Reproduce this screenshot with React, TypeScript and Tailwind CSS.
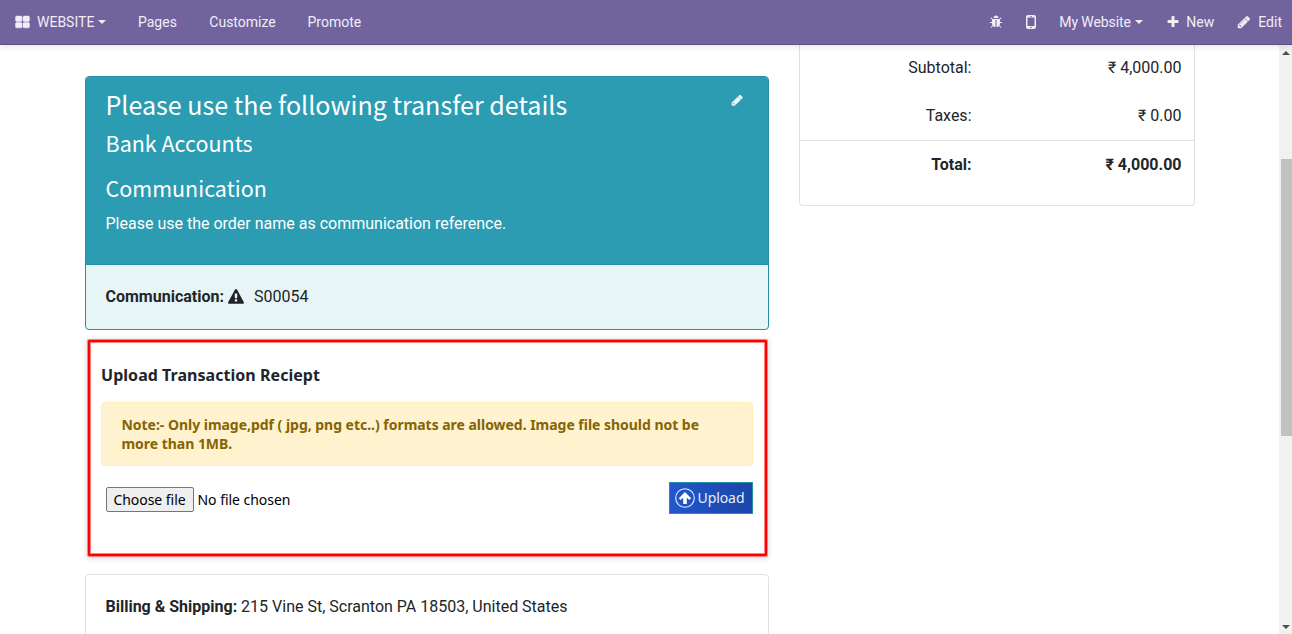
import React from "react";

const paths = {
  grid: "M832 1024v384q0 52-38 90t-90 38h-512q-52 0-90-38t-38-90v-384q0-52 38-90t90-38h512q52 0 90 38t38 90zm0-768v384q0 52-38 90t-90 38h-512q-52 0-90-38t-38-90v-384q0-52 38-90t90-38h512q52 0 90 38t38 90zm896 768v384q0 52-38 90t-90 38h-512q-52 0-90-38t-38-90v-384q0-52 38-90t90-38h512q52 0 90 38t38 90zm0-768v384q0 52-38 90t-90 38h-512q-52 0-90-38t-38-90v-384q0-52 38-90t90-38h512q52 0 90 38t38 90z",
  pencil:
    "M491 1536l91-91-235-235-91 91v107h128v128h107zm523-928q0-22-22-22-10 0-17 7l-542 542q-7 7-7 17 0 22 22 22 10 0 17-7l542-542q7-7 7-17zm-54-192l416 416-832 832h-416v-416zm683 96q0 53-37 90l-166 166-416-416 166-165q36-38 90-38 53 0 91 38l235 234q37 39 37 91z",
  plus: "M1600 736v192q0 40-28 68t-68 28h-416v416q0 40-28 68t-68 28h-192q-40 0-68-28t-28-68v-416h-416q-40 0-68-28t-28-68v-192q0-40 28-68t68-28h416v-416q0-40 28-68t68-28h192q40 0 68 28t28 68v416h416q40 0 68 28t28 68z",
  bug: "M1696 960q0 26-19 45t-45 19h-224q0 171-67 290l208 209q19 19 19 45t-19 45q-18 19-45 19t-45-19l-198-197q-5 5-15 13t-42 28.5-65 36.5-82 29-97 13v-896h-128v896q-51 0-101.5-13.5t-87-33-66-39-43.5-32.5l-15-14-183 207q-20 21-48 21-24 0-43-16-19-18-20.5-44.5t15.5-46.5l202-227q-58-114-58-274h-224q-26 0-45-19t-19-45 19-45 45-19h224v-294l-173-173q-19-19-19-45t19-45 45-19 45 19l173 173h844l173-173q19-19 45-19t45 19 19 45-19 45l-173 173v294h224q26 0 45 19t19 45zm-480-576h-640q0-133 93.5-226.5t226.5-93.5 226.5 93.5 93.5 226.5z",
  warning:
    "M1024 1375v-190q0-14-9.5-23.5t-22.5-9.5h-192q-13 0-22.5 9.5t-9.5 23.5v190q0 14 9.5 23.5t22.5 9.5h192q13 0 22.5-9.5t9.5-23.5zm-2-374l18-459q0-12-10-19-13-11-24-11h-220q-11 0-24 11-10 7-10 21l17 457q0 10 10 16.5t24 6.500h185q14 0 23.500-6.500t10.500-16.500zm-14-934l768 1408q35 63-2 126-17 29-46.500 46t-63.500 17h-1536q-34 0-63.500-17t-46.500-46q-37-63-2-126l768-1408q17-31 47-49t65-18 65 18 47 49z",
};

function Icon({ name, className }: { name: keyof typeof paths; className: string }) {
  return (
    <svg viewBox="0 0 1792 1792" className={`shrink-0 fill-current ${className}`} aria-hidden="true">
      <path d={paths[name]} />
    </svg>
  );
}

function Caret() {
  return (
    <svg viewBox="0 0 8 4" className="ml-[4px] h-[4px] w-[8px] shrink-0 fill-current" aria-hidden="true">
      <path d="M0 0h8L4 4z" />
    </svg>
  );
}

function Navbar() {
  return (
    <nav className="relative z-10 flex h-[45px] items-center border-b border-[#5f5187] bg-[#71639e] pr-[10px] pl-[15px] text-[14px] leading-[44px] text-[#f0eef5] shadow-[0_2px_6px_rgba(0,0,0,0.1)]">
      <a className="flex w-[123px] items-center">
        <Icon name="grid" className="mr-[7px] size-[15px] stroke-current stroke-[60]" />
        WEBSITE
        <Caret />
      </a>
      <a className="w-[71.300px]">Pages</a>
      <a className="w-[98.200px]">Customize</a>
      <a>Promote</a>
      <div className="ml-auto flex items-center">
        <Icon name="bug" className="mr-[23px] size-[14px]" />
        <svg viewBox="0 0 10 14" className="mr-[23px] h-[14px] w-[10px]" aria-hidden="true">
          <path
            fillRule="evenodd"
            fill="currentColor"
            d="M2 0h6a2 2 0 0 1 2 2v10a2 2 0 0 1-2 2H2a2 2 0 0 1-2-2V2a2 2 0 0 1 2-2zM1.500 2.500v8.500h7V2.500zM4 1v.7h2V1zM5 11.700a.8.8 0 1 0 0 1.600.8.8 0 0 0 0-1.600z"
          />
        </svg>
        <a className="flex w-[107px] items-center tracking-[-0.08px]">
          My Website
          <Caret />
        </a>
        <a className="flex w-[71px] items-center">
          <Icon name="plus" className="mr-[6px] size-[14px]" />
          New
        </a>
        <a className="flex items-center">
          <Icon name="pencil" className="mr-[7px] size-[14px] stroke-current stroke-[50]" />
          Edit
        </a>
      </div>
    </nav>
  );
}

function TransferCard() {
  return (
    <section className="h-[254px] overflow-hidden rounded-[4px] border border-[#278ea5] bg-[#e8f5f7]">
      <div className="flex h-[188px] justify-between border-b border-[#278ea5] bg-[#2c9cb2] px-[19.500px] text-white">
        <div>
          <div className="font-['Noto_Sans_CJK_SC',sans-serif]">
            <h2 className="mt-[10px] text-[25.080px] leading-[34px]">Please use the following transfer details</h2>
            <h3 className="mt-[8px] text-[21.500px] leading-[28px]">Bank Accounts</h3>
            <h3 className="mt-[17px] text-[21.500px] leading-[28px]">Communication</h3>
          </div>
          <p className="mt-[10px] text-[16px] leading-[24px]">Please use the order name as communication reference.</p>
        </div>
        <Icon name="pencil" className="mt-[16.500px] mr-[5px] size-[12.500px] stroke-current stroke-[50]" />
      </div>
      <div className="flex h-[64px] items-center px-[19.500px] text-[16px]">
        <b>Communication:</b>
        <Icon name="warning" className="ml-[4.500px] size-[16px]" />
        <span className="ml-[9.500px]">S00054</span>
      </div>
    </section>
  );
}

function UploadCard() {
  return (
    <section className="mr-[2px] ml-[3px] mt-[10px] h-[216px] rounded-[1px] border-[2px] border-[#ff0000] pr-[12px] pl-[11px] font-['Noto_Sans',sans-serif] shadow-[0_0_0_1px_#ff8080,inset_0_0_0_1px_#ff8080,0_1px_5px_2px_rgba(0,0,0,0.12)]">
      <h4 className="mt-[21px] text-[16px] leading-[24px] font-bold tracking-[0.04px]">Upload Transaction Reciept</h4>
      <p className="mt-[15px] h-[64px] rounded-[4px] border border-[#ffeeba] bg-[#fff2ce] px-[19.500px] pt-[12px] text-[14px] leading-[19px] font-bold tracking-[-0.03px] text-[#856404]">
        Note:- Only image,pdf ( jpg, png etc..) formats are allowed. Image file should not be more than 1MB.
      </p>
      <div className="mt-[16px] flex justify-between">
        <label className="mt-[5px] ml-[5px] flex h-[25px] items-center text-[14px] tracking-[-0.04px] text-black">
          <button className="mr-[3.500px] h-[25px] w-[88px] rounded-[2px] border border-[#767676] bg-[#efefef] pr-[1px]">
            Choose file
          </button>
          No file chosen
        </label>
        <button className="flex h-[32px] w-[84px] items-center border border-[#278ea5] bg-linear-to-r from-[#2257cd] to-[#1b45a8] pl-[5px] text-[14px] text-[#e8eefc]">
          <svg viewBox="0 0 20 20" className="mr-[2.500px] size-[20px] shrink-0" aria-hidden="true">
            <circle cx="10" cy="10" r="9.300" fill="none" stroke="currentColor" strokeWidth="1.100" />
            <path d="M10 4l6.200 6.200-1.900 1.900L11.800 9.700V16H8.200V9.700l-2.500 2.400-1.900-1.900z" fill="#fff" />
          </svg>
          <span className="pb-[1px] tracking-[-0.080px]">Upload</span>
        </button>
      </div>
    </section>
  );
}

function SummaryRow({ label, value }: { label: string; value: string }) {
  return (
    <div className="flex h-[48px] items-center">
      <span className="w-[171.500px] text-right">{label}</span>
      <span className="flex-1 text-right">{value}</span>
    </div>
  );
}

function OrderSummary() {
  return (
    <aside className="h-[161px] w-[396px] shrink-0 rounded-b-[4px] border border-t-0 border-[#dee2e6] text-[16px]">
      <div className="-mt-px h-[96px] pr-[12.500px]">
        <SummaryRow label="Subtotal:" value="₹ 4,000.00" />
        <SummaryRow label="Taxes:" value="₹ 0.00" />
      </div>
      <div className="border-t border-[#dee2e6] pr-[12.500px] font-bold">
        <SummaryRow label="Total:" value="₹ 4,000.00" />
      </div>
    </aside>
  );
}

function Scrollbar() {
  return (
    <div className="ml-auto flex w-[13px] flex-col items-end bg-[#f1f1f1]">
      <svg viewBox="0 0 8 4" className="mt-[6px] mr-[2px] h-[4px] w-[8px]" aria-hidden="true">
        <path d="M4 0l4 4H0z" fill="#505050" />
      </svg>
      <div className="mt-[104px] h-[277px] w-[11px] bg-[#c1c1c1]" />
      <svg viewBox="0 0 8 4" className="mt-auto mr-[2px] mb-[5px] h-[4px] w-[8px]" aria-hidden="true">
        <path d="M0 0h8L4 4z" fill="#505050" />
      </svg>
    </div>
  );
}

export default function App() {
  return (
    <div className="flex h-[634px] w-[1292px] flex-col overflow-hidden bg-white font-[Roboto,sans-serif] text-[#212529]">
      <Navbar />
      <div className="flex h-[589px] pl-[85px]">
        <main className="mr-[30px] w-[684px] shrink-0 pt-[31px]">
          <TransferCard />
          <UploadCard />
          <section className="mt-[18px] h-[80px] rounded-[4px] border border-[#dee2e6] px-[19.500px] pt-[20px] text-[16px] leading-[24px]">
            <b>Billing &amp; Shipping:</b> 215 Vine St, Scranton PA 18503, United States
          </section>
        </main>
        <OrderSummary />
        <Scrollbar />
      </div>
    </div>
  );
}
